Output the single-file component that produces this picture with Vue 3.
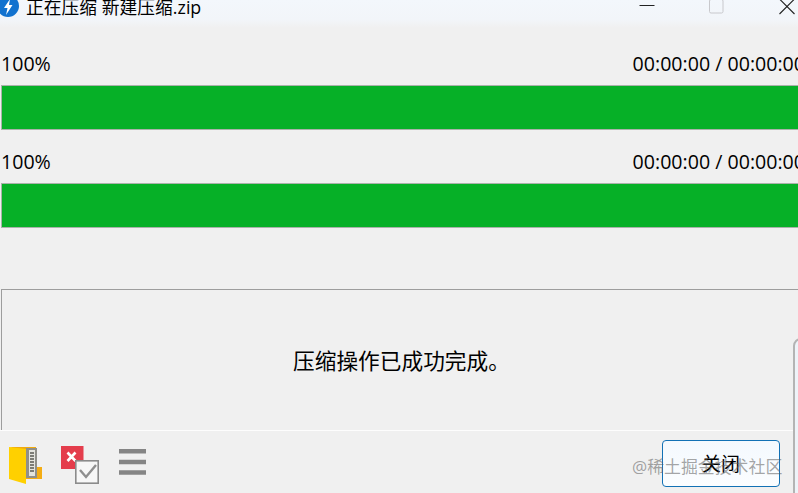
<script setup>
const rows = [
  { id: 1, pct: '100%', time: '00:00:00 / 00:00:00' },
  { id: 2, pct: '100%', time: '00:00:00 / 00:00:00' },
]
</script>

<template>
  <div class="win">
    <header class="titlebar">
      <div class="title-left">
        <svg class="logo" width="22" height="22" viewBox="0 0 22 22">
          <circle cx="11" cy="11" r="11" fill="#1272cf" />
          <path d="M13 4 L7 13 H10.500 L9 20 L15.500 10 H12 Z" fill="#fff" />
        </svg>
        <span class="title">正在压缩 新建压缩.zip</span>
      </div>
      <div class="controls">
        <svg width="16" height="14" viewBox="0 0 16 14"><path d="M0.500 6.500H15.500" stroke="#222" stroke-width="1" /></svg>
        <svg width="16" height="16" viewBox="0 0 16 16"><rect x="0.500" y="0.500" width="13.500" height="13.500" rx="1.500" fill="none" stroke="#c8c8cc" /></svg>
        <svg width="16" height="16" viewBox="0 0 16 16"><path d="M0.500 0L15.500 15M15.500 0L0.500 15" stroke="#222" stroke-width="1.100" /></svg>
      </div>
    </header>

    <main class="main">
      <section v-for="row in rows" :key="row.id" class="progress">
        <div class="labels">
          <span>{{ row.pct }}</span>
          <span class="time">{{ row.time }}</span>
        </div>
        <div class="bar"></div>
      </section>

      <div class="panel">
        <p class="msg">压缩操作已成功完成。</p>
      </div>
    </main>

    <footer class="footer">
      <div class="tools">
        <svg width="36" height="40" viewBox="0 0 36 40">
          <path d="M1 1 H28 V6 H18 Z" fill="#f0aa10" />
          <path d="M18 21 H34 V33 H18 Z" fill="#f4ad14" />
          <rect x="18" y="2" width="11" height="30" fill="#8f8f8a" />
          <rect x="21" y="4" width="6" height="26" fill="#e4e4de" />
          <path d="M22 7H26M22 10H26M22 13H26M22 16H26M22 19H26M22 22H26M22 25H26" stroke="#5a5a54" stroke-width="1.400" />
          <path d="M1 1 L18 3 V38 L1 33 Z" fill="#ffd000" />
        </svg>
        <svg width="38" height="38" viewBox="0 0 38 38">
          <rect x="0" y="0" width="22.500" height="23" fill="#e43d4c" />
          <path d="M6.500 6.500 L14.500 15 M14.500 6.500 L6.500 15" stroke="#fff" stroke-width="2.600" />
          <rect x="14.800" y="14.800" width="22.400" height="22.400" fill="#f7f7f7" stroke="#8b8b8b" stroke-width="1.600" />
          <path d="M19 24 L25 31 L35 19" fill="none" stroke="#8f8f8f" stroke-width="2.400" />
        </svg>
        <svg class="menu" width="27" height="26" viewBox="0 0 27 26">
          <path d="M0 2.250H27M0 13H27M0 23.500H27" stroke="#858585" stroke-width="4.500" />
        </svg>
      </div>
      <button class="close" type="button">关闭</button>
    </footer>

    <div class="edge"></div>
    <span class="watermark">@稀土掘金技术社区</span>
  </div>
</template>

<style>
html, body { margin: 0; background: #f0f0f0; }
</style>

<style scoped>
.win {
  position: relative;
  width: 798px;
  height: 493px;
  overflow: hidden;
  background: #f0f0f0;
  color: #000;
  font-family: "Open Sans", "Noto Sans CJK SC", sans-serif;
  display: flex;
  flex-direction: column;
}
.titlebar {
  height: 28px;
  flex: none;
  display: flex;
  justify-content: space-between;
  background: linear-gradient(#f3f7fc, #f2f5f9 70%, #f0f0f0);
}
.title-left { display: flex; align-items: flex-start; gap: 7px; margin-left: -3px; margin-top: -5px; }
.logo { flex: none; }
.title { font-size: 17.800px; line-height: 24px; white-space: nowrap; }
.controls { display: flex; gap: 54px; align-items: flex-start; margin-right: 3px; margin-top: -1px; }
.main {
  flex: 1;
  padding: 24px 0 0 1px;
  min-height: 0;
  display: flex;
  flex-direction: column;
}
.progress { margin-bottom: 20px; }
.labels {
  display: flex;
  justify-content: space-between;
  height: 33px;
  line-height: 24px;
  font-size: 19.600px;
  white-space: nowrap;
  margin-right: -7px;
}
.time { margin-left: auto; }
.bar {
  height: 43px;
  margin-right: -4px;
  background: #06b027;
  border: 1px solid #aab2aa;
}
.panel {
  flex: 1;
  margin-top: 41px;
  margin-right: -4px;
  border: 1px solid #9d9d9d;
  border-bottom: none;
}
.msg {
  margin: 56px 0 0;
  text-align: center;
  font-size: 21.700px;
  line-height: 30px;
}
.footer {
  height: 63px;
  flex: none;
  box-sizing: border-box;
  border-top: 1px solid #fdfdfd;
  display: flex;
  justify-content: space-between;
  background: #f0f0f0;
}
.tools { display: flex; align-items: flex-start; gap: 17px; padding: 15px 0 0 8px; }
.menu { margin-top: 3px; margin-left: 3px; }
.close {
  width: 118px;
  height: 47px;
  margin: 9px 18px 0 0;
  box-sizing: border-box;
  background: linear-gradient(#f4f9fe, #fbfdff);
  border: 1px solid #1271b5;
  border-radius: 4px;
  font: 19px "Open Sans", "Noto Sans CJK SC", sans-serif;
  color: #000;
  padding: 0 0 2px 0;
}
.edge {
  position: absolute;
  left: 793px;
  top: 338px;
  width: 20px;
  height: 170px;
  box-sizing: border-box;
  border: 2px solid #b4b4b4;
  border-radius: 8px 0 0 0;
  background: #eef3f8;
}
.watermark {
  position: absolute;
  left: 632px;
  top: 455px;
  font-size: 16.900px;
  line-height: 24px;
  color: rgba(90, 90, 90, 0.55);
  white-space: nowrap;
  pointer-events: none;
}
</style>
